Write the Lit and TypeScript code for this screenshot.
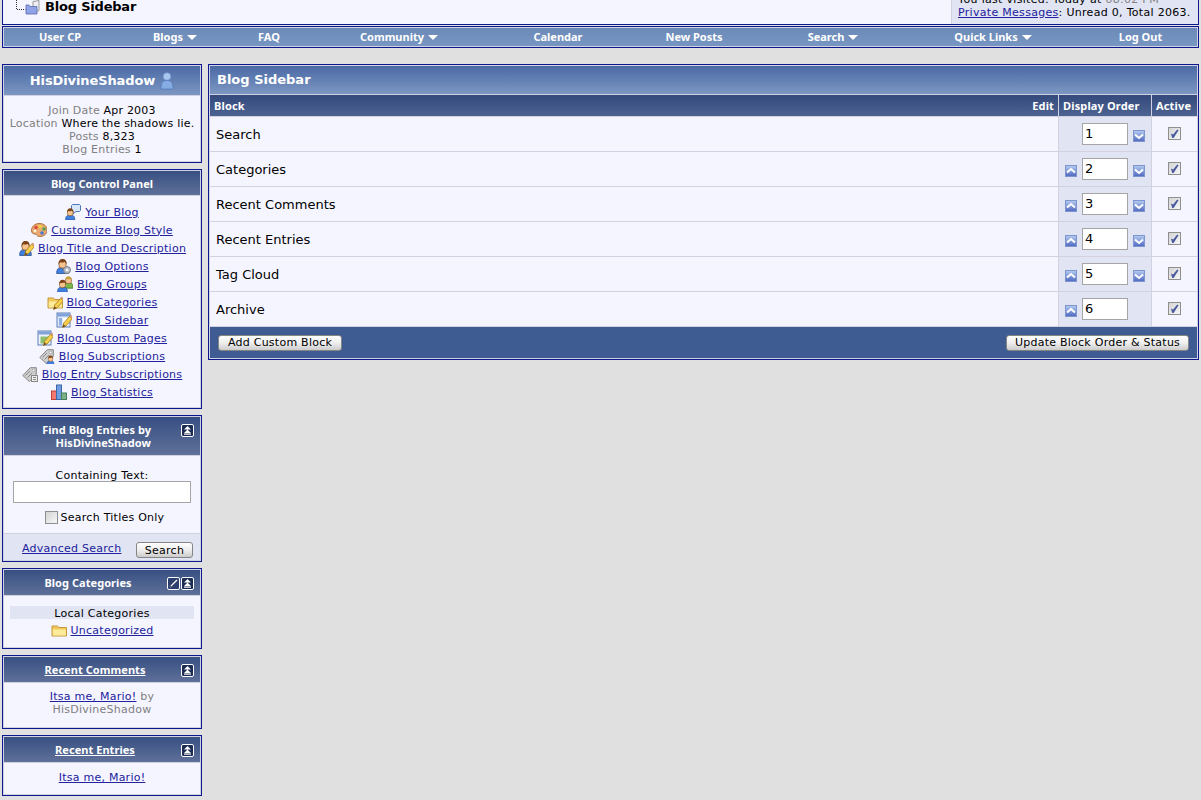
import { LitElement, html, css, svg } from "lit";
import { customElement } from "lit/decorators.js";

const person = (x = 0, y = 0) => svg`<g transform="translate(${x} ${y})"><path d="M.7 15.500c0-4 1.300-5.500 3.300-5.800l2.500 1 2.500-1c2 .3 3.300 1.800 3.300 5.800z" fill="#3f7fe0" stroke="#27508f" stroke-width=".8"/><rect x="3" y="3" width="7" height="7" rx="2.500" fill="#f6c38e" stroke="#8f5a2c" stroke-width=".8"/><path d="M2.600 6.500c-.4-3.500 1.400-5.500 4-5.500s4.400 2 4 5.500c-.8-1.500-1.400-2.200-2-2.500-1.500.7-3.500.7-4.500.3-.7.5-1.100 1.200-1.500 2.200z" fill="#7a4418"/></g>`;
const pencil = svg`<path d="M6.500 15.500l1.200-4.500 6-6.800 2.800 2.500-6 6.800z" fill="#f6cf4e" stroke="#a87a18" stroke-width=".8"/><path d="M6.500 15.500l.9-3.200 2.300 2z" fill="#6a4a20"/><path d="M13.700 4.200l2.800 2.500 1-1.200-2.800-2.500z" fill="#e8a0a0" stroke="#a87a18" stroke-width=".5"/>`;
const folderShape = svg`<path d="M1 4h5.500l1.200 1.500h7.800v8.500h-14.500z" fill="#f4c95c" stroke="#c4983c"/><path d="M1.800 7.500h13v6h-13z" fill="#fdeb9c"/>`;
const pageShape = svg`<rect x="1" y="1" width="13" height="14" fill="#dfe9f8" stroke="#5d7fb4"/><rect x="1.500" y="1.500" width="12" height="3" fill="#7fa2d8"/><rect x="3" y="6" width="3" height="7.500" fill="#8fb0e0"/><rect x="7" y="6" width="5.500" height="7.500" fill="#fff"/>`;
const tag = svg`<path d="M.8 9.500l7.500-7.800h6v6.500l-7 7.300z" fill="#cfcfcf" stroke="#858585"/><circle cx="11.500" cy="4.500" r="1.300" fill="#fff" stroke="#777" stroke-width=".5"/><path d="M3.500 9.500l4.500-4.500M5.500 11.500l4.500-4.500" stroke="#8a8a8a"/>`;

const icons: Record<string, unknown> = {
  blog: svg`<path d="M7.500 .5h7l1 1v5l-1 1h-3.500l-3 2.500v-2.500h-.5l-1-1v-5z" fill="#d6e6fb" stroke="#4f78b8"/><g transform="translate(0 3.500) scale(.8)">${person()}</g>`,
  palette: svg`<path d="M8 1.500c5 0 8 2.500 8 6.500s-3 6.500-7.500 6.500c-3 0-2.500-2.500-4.500-2.500-2 0-3.500-1-3.500-3.500 0-4 3.500-7 7.500-7z" fill="#e9a970" stroke="#a8703c"/><circle cx="5" cy="5.500" r="1.800" fill="#e04a3a"/><circle cx="9" cy="4.500" r="1.800" fill="#f3d040"/><circle cx="13" cy="7" r="1.800" fill="#50a050"/><circle cx="11" cy="11" r="1.800" fill="#4a78d0"/><circle cx="4" cy="9" r="1.400" fill="#fff3dd"/>`,
  title: svg`${person(1, 0)}${pencil}`,
  options: svg`${person(1, 0)}<circle cx="12" cy="12" r="3.500" fill="#b8bcc4" stroke="#7c808a"/><circle cx="12" cy="12" r="1.200" fill="#fff"/>`,
  groups: svg`<g transform="translate(6 -1) scale(.85)"><path d="M.7 15.500c0-4 1.300-5.800 3.300-5.800h5c2 0 3.300 1.800 3.300 5.800z" fill="#7ab848" stroke="#3f7a2c"/><rect x="3" y="3" width="7" height="7" rx="2.500" fill="#f6c38e" stroke="#8f5a2c" stroke-width=".8"/><path d="M3 5c0-2 1.500-3.500 3.500-3.500s3.500 1.500 3.500 3.500z" fill="#c9a23c"/></g><g transform="translate(0 3) scale(.85)">${person()}</g>`,
  cats: svg`${folderShape}${pencil}`,
  sidebar: svg`${pageShape}${pencil}`,
  pages: svg`<rect x="1" y="1" width="13" height="14" fill="#eef3fb" stroke="#5d7fb4"/><rect x="1.500" y="1.500" width="12" height="3" fill="#7fa2d8"/><rect x="3.500" y="6.500" width="8" height="7" fill="#8cc070"/>${pencil}`,
  subs: svg`${tag}<g transform="translate(7.500 7) scale(.62)">${person()}</g>`,
  entries: svg`${tag}<rect x="9.500" y="9.500" width="6" height="6" fill="#eeeeee" stroke="#888"/><path d="M11 11.500h3M11 13.500h3" stroke="#888"/>`,
  stats: svg`<rect x=".5" y="7" width="5" height="8.500" fill="#f37a70" stroke="#c04038"/><rect x="5.500" y="1" width="5" height="14.500" fill="#6f9ee0" stroke="#3a68a8"/><rect x="10.500" y="9" width="5" height="6.500" fill="#7fb08a" stroke="#44805a"/>`,
  folder: folderShape,
};

const icon = (name: string) => html`<svg class="ico" viewBox="0 0 16 16" width="16" height="16">${icons[name]}</svg>`;

const collapse = html`<svg class="toggle" viewBox="0 0 13 13" width="13" height="13"><rect x=".5" y=".5" width="12" height="12" rx="1.500" fill="#1c2c52" stroke="#fff"/><path d="M6.500 2l3.500 3.500h-7zM6.500 5.500l3.500 3.500h-7z" fill="#fff"/><rect x="3" y="9.500" width="7" height="1.200" fill="#fff"/></svg>`;
const editBtn = html`<svg class="toggle" viewBox="0 0 13 13" width="13" height="13"><rect x=".5" y=".5" width="12" height="12" rx="1.500" fill="#2c3f6e" stroke="#fff"/><path d="M3 10l7-7" stroke="#fff" stroke-width="1.300"/><path d="M3 10l1.500-.4-1.100-1.100z" fill="#111"/></svg>`;
const arrow = (up: boolean) => html`<svg class="arrow" viewBox="0 0 12 12" width="12" height="12"><defs><linearGradient id="ag" x1="0" y1="0" x2="0" y2="1"><stop offset="0" stop-color="#b5cdf0"/><stop offset="1" stop-color="#4f68c0"/></linearGradient></defs><rect x=".5" y=".5" width="11" height="11" fill="url(#ag)" stroke="#7f95d0"/><path d="${up ? "M2 7.500l4-3.500 4 3.500" : "M2 4.500l4 3.500 4-3.500"}" fill="none" stroke="#fff" stroke-width="2"/></svg>`;

const navItems: [string, boolean][] = [
  ["User CP", false], ["Blogs", true], ["FAQ", false], ["Community", true], ["Calendar", false],
  ["New Posts", false], ["Search", true], ["Quick Links", true], ["Log Out", false],
];
const controlLinks: [string, string][] = [
  ["blog", "Your Blog"], ["palette", "Customize Blog Style"], ["title", "Blog Title and Description"],
  ["options", "Blog Options"], ["groups", "Blog Groups"], ["cats", "Blog Categories"],
  ["sidebar", "Blog Sidebar"], ["pages", "Blog Custom Pages"], ["subs", "Blog Subscriptions"],
  ["entries", "Blog Entry Subscriptions"], ["stats", "Blog Statistics"],
];
const blocks = ["Search", "Categories", "Recent Comments", "Recent Entries", "Tag Cloud", "Archive"];

@customElement("app-root")
export class AppRoot extends LitElement {
  static styles = css`
    :host { display: block; height: 800px; background: #e0e0e0; font: 11px/13px "DejaVu Sans", Verdana, sans-serif; letter-spacing: .25px; color: #000; overflow: hidden; }
    a { color: #22229c; text-decoration: underline; }
    .page { padding: 0 2px; width: 1197px; }
    .top { height: 24px; border: 1px solid #0b198c; border-top: 0; background: #f5f5ff; display: flex; overflow: hidden; }
    .crumb { flex: 1; display: flex; align-items: flex-start; padding: 0 0 0 11px; font: bold 13px/14px "DejaVu Sans", sans-serif; letter-spacing: -.2px; }
    .crumb svg { margin-right: 4px; flex: none; }
    .user { width: 247px; box-sizing: border-box; background: #e1e4f2; border-left: 1px solid #d1d1e1; padding: 0 0 5px 6px; display: flex; flex-direction: column; justify-content: flex-end; white-space: nowrap; letter-spacing: .3px; }
    .grey { color: #808080; }
    .nav { margin-top: 1px; border: 1px solid #0b198c; padding: 1px; background: #d1d1e1; }
    .nav-in { display: grid; grid-template-columns: 112px 118px 70px 190px 128px 144px 134px 186px 109px; height: 18px; background: linear-gradient(#6b8ab8, #7896c2); align-items: center; text-align: center; color: #fff; font: bold 11px/18px "Noto Sans", Tahoma, sans-serif; letter-spacing: 0; }
    .caret { display: inline-block; width: 0; height: 0; border: 5px solid transparent; border-top: 5px solid #fff; border-bottom: 0; margin-left: 4px; vertical-align: 1px; }
    .cols { display: flex; gap: 6px; margin-top: 16px; align-items: flex-start; }
    .side { width: 200px; flex: none; display: flex; flex-direction: column; gap: 6px; }
    .box { border: 1px solid #0b198c; padding: 1px; background: #d1d1e1; display: flex; flex-direction: column; gap: 1px; box-sizing: border-box; }
    .head { background: linear-gradient(#375083, #5f7099); color: #fff; font: bold 11px/13px "Noto Sans", Tahoma, sans-serif; letter-spacing: .05px; text-align: center; display: flex; align-items: center; justify-content: center; }
    .head a { color: #fff; }
    .tooled { padding: 0 6px 0 5px; align-items: stretch; }
    .htext { flex: 1; align-self: center; }
    .tools { display: flex; gap: 1px; margin-top: 7px; align-self: flex-start; }
    .toggle { display: block; }
    .body { background: #f5f5ff; text-align: center; padding: 7px 6px; }
    .profile .head { height: 29px; background: linear-gradient(#4a6aa5, #7d97c2); font: bold 13px/16px "DejaVu Sans", sans-serif; letter-spacing: -.1px; gap: 5px; }
    .profile .body { height: 65px; padding: 8px 0 0; box-sizing: border-box; white-space: nowrap; letter-spacing: .2px; }
    .links { height: 211px; box-sizing: border-box; padding: 7px 0 0; display: flex; flex-direction: column; align-items: center; }
    .links div { height: 18px; display: flex; align-items: center; gap: 4px; }
    .ico { flex: none; display: block; }
    .h24 { height: 24px; }
    .h25 { height: 25px; }
    .find .head { height: 38px; }
    .find .htext { text-align: right; padding-right: 30px; }
    .find .body { height: 77px; padding: 13px 0 0; box-sizing: border-box; }
    .cap { height: 12px; }
    .find input.text { display: block; width: 178px; height: 22px; margin: 0 0 0 9px; box-sizing: border-box; border: 1px solid #a5a5a5; background: #fff; }
    .only { display: flex; align-items: center; justify-content: center; gap: 3px; margin-top: 8px; padding-left: 5px; }
    .foot { background: #e1e4f2; height: 26px; box-sizing: border-box; display: flex; align-items: flex-start; justify-content: space-between; padding: 8px 7px 0 18px; }
    button { font: 11px/13px "DejaVu Sans", sans-serif; letter-spacing: .25px; border: 1px solid #858585; border-radius: 3px; background: linear-gradient(#fff, #eeeeee 50%, #cccccc); padding: 0; color: #000; height: 16px; display: block; }
    .cats { height: 51px; box-sizing: border-box; padding: 10px 6px 0; }
    .strip { background: #e1e4f2; height: 13px; line-height: 15px; }
    .uncat { display: flex; align-items: center; justify-content: center; gap: 4px; height: 16px; margin-top: 3px; }
    .rc { height: 44px; box-sizing: border-box; padding: 7px 30px 0; }
    .re { height: 31px; box-sizing: border-box; padding: 8px 6px 0; }
    .main { width: 991px; flex: none; }
    .title { height: 28px; padding-left: 7px; background: linear-gradient(#4a6aa5, #7d97c2); color: #fff; font: bold 13px/28px "DejaVu Sans", sans-serif; letter-spacing: 0; }
    .grid { display: grid; grid-template-columns: 848px 92px 45px; gap: 1px; }
    .th { height: 21px; background: linear-gradient(#34497c, #4d6391); color: #fff; font: bold 11px/21px "Noto Sans", Tahoma, sans-serif; letter-spacing: .15px; padding: 0 4px; box-sizing: border-box; display: flex; justify-content: space-between; white-space: nowrap; }
    .name { height: 34px; background: #f5f5ff; font: 13px/36px "DejaVu Sans", sans-serif; letter-spacing: 0; padding-left: 6px; box-sizing: border-box; }
    .order { height: 34px; background: #e1e4f2; display: grid; grid-template-columns: 12px 46px 12px; gap: 5px; padding: 6px 0 0 6px; align-items: start; box-sizing: border-box; }
    .order input { width: 46px; height: 22px; box-sizing: border-box; border: 1px solid #a5a5a5; background: #fff; font: 13px/16px "DejaVu Sans", sans-serif; letter-spacing: 0; padding: 0 0 2px 2px; margin: 0; color: #000; }
    .arrow { display: block; margin-top: 7px; }
    .act { height: 34px; box-sizing: border-box; padding-bottom: 1px; background: #f5f5ff; display: flex; align-items: center; justify-content: center; }
    .chk { appearance: none; -webkit-appearance: none; width: 13px; height: 13px; margin: 0; border: 1px solid #8f8f8f; background: linear-gradient(135deg, #d4d4d4, #f6f6f6); position: relative; display: block; box-sizing: border-box; }
    .chk:checked::after { content: ""; position: absolute; inset: 1px; background: #4a5a9e; clip-path: polygon(10% 50%, 35% 62%, 80% 5%, 95% 15%, 40% 100%, 25% 100%); }
    .mfoot { height: 31px; background: #3e5c92; display: flex; align-items: center; justify-content: space-between; padding: 0 8px 0 8px; }
    .w124 { width: 124px; } .w183 { width: 183px; } .w57 { width: 57px; }
  `;

  render() {
    return html`<div class="page">
      <div class="top">
        <div class="crumb">
          <svg width="27" height="15" viewBox="0 0 27 15"><path d="M2.500 0v9.500h9" fill="none" stroke="#333" stroke-dasharray="1 1"/><path d="M19 1.500l6-1v10l-6 3z" fill="#eeeef4" stroke="#777" stroke-width=".7"/><path d="M12 5h3l1 1.500h7v7.500h-11z" fill="#8fa3e6" stroke="#5a6bb0" stroke-width=".8"/></svg>
          Blog Sidebar
        </div>
        <div class="user">
          <div>You last visited: Today at <span class="grey">08:02 PM</span></div>
          <div><a href="#">Private Messages</a>: Unread 0, Total 2063.</div>
        </div>
      </div>
      <div class="nav"><div class="nav-in">
        ${navItems.map(([t, c]) => html`<div>${t}${c ? html`<span class="caret"></span>` : ""}</div>`)}
      </div></div>
      <div class="cols">
        <div class="side">
          <div class="box profile">
            <div class="head">HisDivineShadow
              <svg width="14" height="18" viewBox="0 0 14 18"><circle cx="7" cy="4.500" r="3.800" fill="#a9c6ee" stroke="#6f94cc" stroke-width=".7"/><path d="M1 17c0-6 1.500-8.500 6-8.500s6 2.500 6 8.500z" fill="#86ace4" stroke="#4f78b8" stroke-width=".7"/></svg>
            </div>
            <div class="body">
              <div><span class="grey">Join Date</span> Apr 2003</div>
              <div><span class="grey">Location</span> Where the shadows lie.</div>
              <div><span class="grey">Posts</span> 8,323</div>
              <div><span class="grey">Blog Entries</span> 1</div>
            </div>
          </div>
          <div class="box">
            <div class="head h24">Blog Control Panel</div>
            <div class="body links">
              ${controlLinks.map(([i, t]) => html`<div>${icon(i)}<a href="#">${t}</a></div>`)}
            </div>
          </div>
          <div class="box find">
            <div class="head tooled"><div class="htext">Find Blog Entries by<br />HisDivineShadow</div><div class="tools">${collapse}</div></div>
            <div class="body">
              <div class="cap">Containing Text:</div>
              <input class="text" type="text" />
              <label class="only"><input class="chk" type="checkbox" />Search Titles Only</label>
            </div>
            <div class="foot"><a href="#">Advanced Search</a><button class="w57">Search</button></div>
          </div>
          <div class="box">
            <div class="head h25 tooled"><div class="htext">Blog Categories</div><div class="tools">${editBtn}${collapse}</div></div>
            <div class="body cats">
              <div class="strip">Local Categories</div>
              <div class="uncat">${icon("folder")}<a href="#">Uncategorized</a></div>
            </div>
          </div>
          <div class="box">
            <div class="head h25 tooled"><div class="htext"><a href="#">Recent Comments</a></div><div class="tools">${collapse}</div></div>
            <div class="body rc"><a href="#">Itsa me, Mario!</a> <span class="grey">by HisDivineShadow</span></div>
          </div>
          <div class="box">
            <div class="head h25 tooled"><div class="htext"><a href="#">Recent Entries</a></div><div class="tools">${collapse}</div></div>
            <div class="body re"><a href="#">Itsa me, Mario!</a></div>
          </div>
        </div>
        <div class="main box">
          <div class="title">Blog Sidebar</div>
          <div class="grid">
            <div class="th"><span>Block</span><span>Edit</span></div>
            <div class="th">Display Order</div>
            <div class="th">Active</div>
            ${blocks.map((b, i) => html`
              <div class="name">${b}</div>
              <div class="order">
                ${i > 0 ? arrow(true) : html`<span></span>`}
                <input type="text" value="${i + 1}" />
                ${i < blocks.length - 1 ? arrow(false) : html`<span></span>`}
              </div>
              <div class="act"><input class="chk" type="checkbox" checked /></div>`)}
          </div>
          <div class="mfoot"><button class="w124">Add Custom Block</button><button class="w183">Update Block Order &amp; Status</button></div>
        </div>
      </div>
    </div>`;
  }
}
